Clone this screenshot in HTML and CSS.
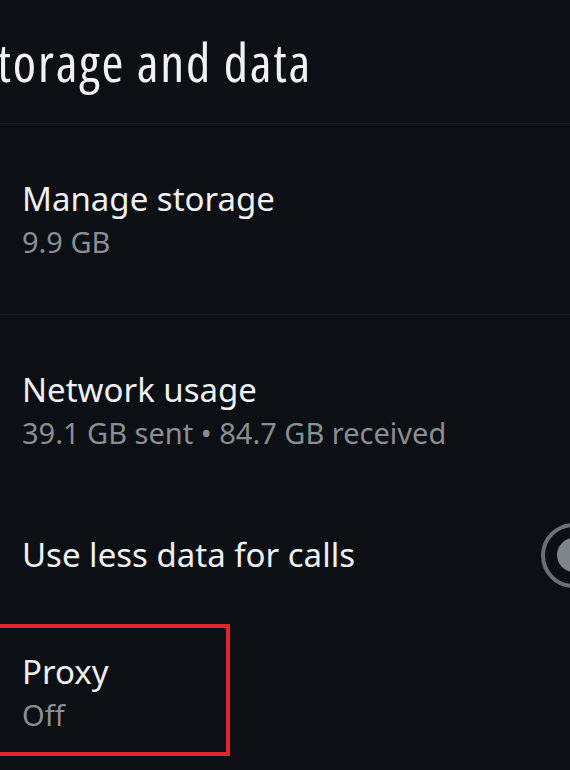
FILE: index.html
```html
<!DOCTYPE html>
<html lang="en">
<head>
<meta charset="utf-8">
<title>Storage and data</title>
<link rel="stylesheet" href="styles.css">
</head>
<body>
<div class="screen">
  <header class="header">
    <h1 class="title">Storage and data</h1>
  </header>
  <div class="row row-two divided">
    <div class="row-text">
      <div class="row-title">Manage storage</div>
      <div class="row-sub">9.9 GB</div>
    </div>
  </div>
  <div class="row row-two">
    <div class="row-text">
      <div class="row-title">Network usage</div>
      <div class="row-sub">39.1 GB sent • 84.7 GB received</div>
    </div>
  </div>
  <div class="row row-one">
    <div class="row-text">
      <div class="row-title">Use less data for calls</div>
    </div>
    <div class="switch"><div class="knob"></div></div>
  </div>
  <div class="row row-proxy">
    <div class="row-text">
      <div class="row-title">Proxy</div>
      <div class="row-sub">Off</div>
    </div>
  </div>
  <div class="highlight"></div>
</div>
</body>
</html>
```

FILE: styles.css
```css
html, body {
  margin: 0;
  padding: 0;
  background: #0c0f14;
}
.screen {
  position: relative;
  width: 570px;
  height: 770px;
  overflow: hidden;
  background: #0c0f14;
  font-family: "Noto Sans", "Open Sans", sans-serif;
  color: #eef0f2;
}
.header {
  height: 123px;
  border-bottom: 1px solid #1b1f24;
  display: flex;
  align-items: flex-start;
}
.title {
  margin: 0;
  margin-left: -26px;
  padding-top: 32px;
  font-family: "Open Sans", sans-serif;
  font-stretch: 75%;
  font-size: 53px;
  font-weight: 400;
  line-height: 60px;
  letter-spacing: 1.8px;
  white-space: nowrap;
  color: #f0f1f3;
}
.row {
  display: flex;
  justify-content: space-between;
  padding-left: 22px;
}
.row-two {
  height: 136px;
  padding-top: 54px;
  align-items: flex-start;
}
.divided {
  border-bottom: 1px solid #1b1f24;
}
.row-one {
  height: 100px;
  align-items: center;
}
.row-proxy {
  padding-top: 46px;
  align-items: flex-start;
}
.row-text {
  display: flex;
  flex-direction: column;
}
.row-title {
  font-size: 33px;
  line-height: 42px;
  white-space: nowrap;
}
.row-sub {
  font-size: 29px;
  line-height: 44px;
  color: #8a8e94;
  white-space: nowrap;
}
.switch {
  flex: none;
  width: 110px;
  height: 57px;
  border: 4px solid #6b6f76;
  border-radius: 40px;
  margin-right: -101px;
  display: flex;
  align-items: center;
  padding-left: 12px;
}
.knob {
  width: 34px;
  height: 34px;
  border-radius: 50%;
  background: #80858c;
}
.highlight {
  position: absolute;
  left: -10px;
  top: 624px;
  width: 232px;
  height: 124px;
  border: 4px solid #e0252f;
}
```
